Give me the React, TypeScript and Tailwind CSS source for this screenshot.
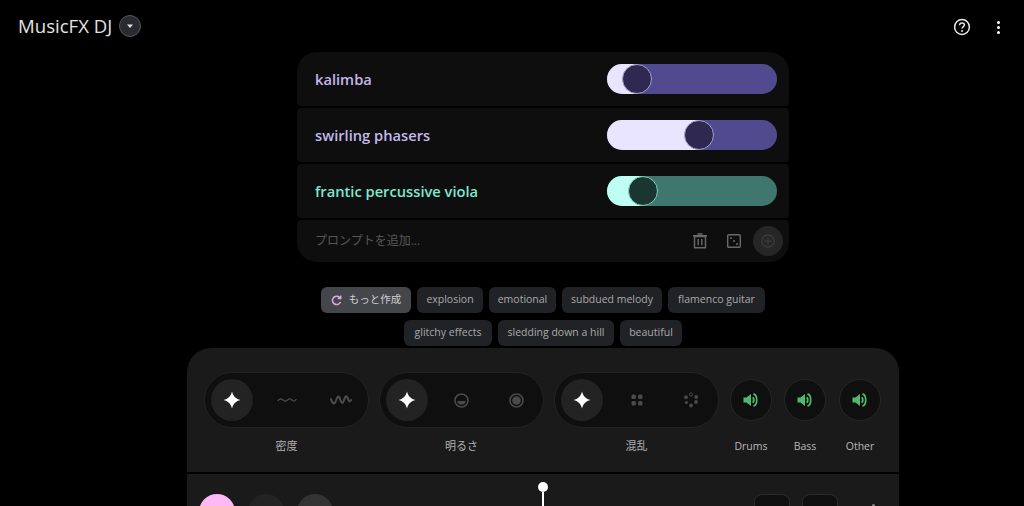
import { ReactNode } from 'react'

const font = { sans: 'font-["Open_Sans","Noto_Sans_CJK_JP",sans-serif]' }

const prompts = [
  { name: 'kalimba', fill: 'w-[30px]', text: 'text-[#c4b8ea]', track: 'bg-[#524a8f]', left: 'bg-[#e9e5ff]', knob: 'bg-[#2f2850]', ring: 'border-[#a79fd0]', pos: 'left-[15px]' },
  { name: 'swirling phasers', fill: 'w-[92px]', text: 'text-[#c4b8ea]', track: 'bg-[#524a8f]', left: 'bg-[#e9e5ff]', knob: 'bg-[#2f2850]', ring: 'border-[#a79fd0]', pos: 'left-[77px]' },
  { name: 'frantic percussive viola', fill: 'w-[36px]', text: 'text-[#7fe8d0]', track: 'bg-[#3f776e]', left: 'bg-[#bffff3]', knob: 'bg-[#1b3630]', ring: 'border-[#7fd0c0]', pos: 'left-[21px]' },
]

const chipRows = [
  [
    { label: 'explosion', w: 'w-[66px]' },
    { label: 'emotional', w: 'w-[67px]' },
    { label: 'subdued melody', w: 'w-[100px]' },
    { label: 'flamenco guitar', w: 'w-[97px]' },
  ],
  [
    { label: 'glitchy effects', w: 'w-[88px]' },
    { label: 'sledding down a hill', w: 'w-[116px]' },
    { label: 'beautiful', w: 'w-[62px]' },
  ],
]

function Sparkle() {
  return (
    <svg width="20" height="20" viewBox="0 0 20 20">
      <path d="M10 1.5C11 6 14 9 18.5 10C14 11 11 14 10 18.5C9 14 6 11 1.5 10C6 9 9 6 10 1.5Z" fill="#fff" />
    </svg>
  )
}

function Speaker() {
  return (
    <svg width="16" height="14" viewBox="0 0 16 14" fill="none">
      <path d="M0.5 4.5H3.5L8 1V13L3.5 9.5H0.5Z" fill="#4fb96f" />
      <path d="M9.8 4.2C11 5.8 11 8.2 9.8 9.8" stroke="#4fb96f" strokeWidth="1.7" />
      <path d="M10.5 0.9C14.8 2.2 14.8 11.8 10.5 13.1" stroke="#4fb96f" strokeWidth="1.7" />
    </svg>
  )
}

const densityLow = (
  <svg width="20" height="8" viewBox="0 0 20 8" fill="none">
    <path d="M1 4.5C3 2.5 4.5 2.5 6 4C7.5 5.5 9 5.5 10.5 4C12 2.5 13.5 2.5 15 4C16.5 5.5 18 5.5 19 3.5" stroke="#484848" strokeWidth="1.3" strokeLinecap="round" />
  </svg>
)

const densityHigh = (
  <svg width="22" height="12" viewBox="0 0 22 12" fill="none">
    <path d="M1 5C2.5 10.5 4.5 11 6 6.5C7.2 2.5 8.6 0.5 10 5C11.2 9.5 12.8 10.5 14 6C15 2.5 16.5 0.5 18 5C18.8 7.5 20 8 21 6" stroke="#4d4d4d" strokeWidth="2" strokeLinecap="round" />
  </svg>
)

const brightLow = (
  <svg width="15" height="15" viewBox="0 0 15 15" fill="none">
    <circle cx="7.5" cy="7.5" r="6.5" stroke="#4a4a4a" strokeWidth="1.6" />
    <path d="M3.2 8H11.8C11.4 10.5 9.6 11.8 7.5 11.8C5.4 11.8 3.6 10.5 3.2 8Z" fill="#4a4a4a" />
  </svg>
)

const brightHigh = (
  <svg width="15" height="15" viewBox="0 0 15 15" fill="none">
    <circle cx="7.5" cy="7.5" r="6.5" stroke="#4a4a4a" strokeWidth="1.6" />
    <circle cx="7.5" cy="7.5" r="4.3" fill="#4a4a4a" />
  </svg>
)

const chaosLow = (
  <svg width="12" height="12" viewBox="0 0 12 12" fill="#4a4a4a">
    <rect x="0.5" y="0.5" width="4.5" height="4.5" rx="1.6" />
    <rect x="7" y="0.5" width="4.5" height="4.5" rx="1.6" />
    <rect x="0.5" y="7" width="4.5" height="4.5" rx="1.6" />
    <rect x="7" y="7" width="4.5" height="4.5" rx="1.6" />
  </svg>
)

const chaosHigh = (
  <svg width="16" height="16" viewBox="0 0 16 16" fill="#4a4a4a">
    <circle cx="8" cy="2.5" r="1.6" fill="none" stroke="#4a4a4a" />
    <circle cx="13.2" cy="5" r="1.9" />
    <circle cx="13" cy="10" r="1.9" />
    <circle cx="8" cy="13.5" r="1.9" />
    <circle cx="3.4" cy="10.5" r="1.6" />
    <circle cx="3" cy="5.2" r="1.9" />
  </svg>
)

function PillControl({ label, first, second }: { label: string; first: ReactNode; second: ReactNode }) {
  return (
    <div className="flex w-[165px] flex-col items-center">
      <div className="flex h-[56px] w-full items-center rounded-full border border-[#232323] bg-[#0f0f0f] pl-[6px]">
        <div className="flex h-[42px] w-[42px] shrink-0 items-center justify-center rounded-full bg-[#232323]">
          <Sparkle />
        </div>
        <div className="ml-[6px] flex w-[55px] shrink-0 justify-center">{first}</div>
        <div className="flex w-[54px] shrink-0 justify-center">{second}</div>
      </div>
      <span className="mt-[11px] text-[11px] leading-[14px] text-[#b0b0b0]">{label}</span>
    </div>
  )
}

function StemControl({ label }: { label: string }) {
  return (
    <div className="flex w-[42px] flex-col items-center">
      <div className="mt-[7px] flex h-[42px] w-[42px] items-center justify-center rounded-full border border-[#262626] bg-[#0f0f0f]">
        <Speaker />
      </div>
      <span className="mt-[18px] text-[10.5px] leading-[14px] text-[#b8b8b8]">{label}</span>
    </div>
  )
}

export default function App() {
  return (
    <div className={`h-[506px] w-[1024px] overflow-hidden bg-black ${font.sans}`}>
      <header className="flex h-[52px] items-center justify-between pl-[18px] pr-[24px]">
        <div className="flex items-center gap-[7px]">
          <h1 className="text-[18.6px] font-normal leading-none text-[#e3e3e3]">MusicFX DJ</h1>
          <div className="flex h-[22px] w-[22px] items-center justify-center rounded-full border border-[#55565c] bg-[#2a2b30]">
            <svg width="8" height="5" viewBox="0 0 8 5"><path d="M1 0.5H7L4 4Z" fill="#e3e3e3" /></svg>
          </div>
        </div>
        <div className="flex items-center gap-[26px] pt-[2px]">
          <svg width="18" height="18" viewBox="0 0 18 18" fill="none">
            <circle cx="9" cy="9" r="7.4" stroke="#e8e8e8" strokeWidth="1.5" />
            <path d="M6.6 7.2C6.6 5.8 7.7 5 9 5C10.4 5 11.4 5.9 11.4 7.1C11.4 8.6 9.1 8.8 9.1 10.6" stroke="#e8e8e8" strokeWidth="1.5" />
            <circle cx="9" cy="12.9" r="1" fill="#e8e8e8" />
          </svg>
          <div className="flex flex-col gap-[2px]">
            <span className="h-[3px] w-[3px] rounded-full bg-white" />
            <span className="h-[3px] w-[3px] rounded-full bg-white" />
            <span className="h-[3px] w-[3px] rounded-full bg-white" />
          </div>
        </div>
      </header>

      <main className="pl-[62px]">
        <section className="mx-auto flex w-[492px] flex-col gap-[2px] overflow-hidden rounded-[20px]">
          {prompts.map((p) => (
            <div key={p.name} className="flex h-[54px] items-center justify-between rounded-[4px] bg-[#0e0e0e] pl-[18px] pr-[12px]">
              <span className={`text-[14.7px] font-semibold ${p.text}`}>{p.name}</span>
              <div className={`relative h-[30px] w-[170px] rounded-full ${p.track}`}>
                <div className={`h-[30px] rounded-l-full ${p.fill} ${p.left}`} />
                <div className={`absolute top-0 h-[30px] w-[30px] rounded-full border ${p.knob} ${p.ring} ${p.pos}`} />
              </div>
            </div>
          ))}
          <div className="flex h-[42px] items-center justify-between rounded-[4px] bg-[#0e0e0e] pl-[18px] pr-[6px]">
            <span className="text-[12px] text-[#565656]">プロンプトを追加...</span>
            <div className="flex items-center">
              <svg width="14" height="16" viewBox="0 0 14 16" fill="none" stroke="#6a6a6a" strokeWidth="1.4">
                <path d="M1.5 3.5H12.5V14.8H1.5Z" />
                <path d="M0 2.8H14M4.5 1H9.5M5.2 6V12.3M8.8 6V12.3" />
              </svg>
              <svg className="ml-[20px]" width="14" height="14" viewBox="0 0 14 14" fill="none">
                <rect x="0.7" y="0.7" width="12.6" height="12.6" rx="1" stroke="#6a6a6a" strokeWidth="1.4" />
                <circle cx="4" cy="4" r="1" fill="#6a6a6a" />
                <circle cx="7" cy="7" r="1" fill="#6a6a6a" />
                <circle cx="10" cy="10" r="1" fill="#6a6a6a" />
              </svg>
              <div className="ml-[12px] flex h-[30px] w-[30px] items-center justify-center rounded-full bg-[#262626]">
                <svg width="14" height="14" viewBox="0 0 14 14" fill="none" stroke="#3f3f3f" strokeWidth="1.2">
                  <circle cx="7" cy="7" r="6.2" />
                  <path d="M7 3.5V10.5M3.5 7H10.5" />
                </svg>
              </div>
            </div>
          </div>
        </section>

        <div className="mt-[25px] flex flex-col items-center gap-[7px]">
          <div className="flex gap-[6px]">
            <div className="flex h-[26px] w-[90px] items-center justify-center gap-[7px] rounded-[6px] bg-[#43464a] text-[10.5px] text-[#cfcfcf]">
              <svg width="11" height="11" viewBox="0 0 11 11" fill="none" stroke="#e6a6e6" strokeWidth="1.5">
                <path d="M9.5 7A4.2 4.2 0 1 1 8.6 2.4L9.6 3.4" />
                <path d="M9.7 0.6V3.6H6.7" />
              </svg>
              もっと作成
            </div>
            {chipRows[0].map((c) => (
              <div key={c.label} className={`flex h-[26px] items-center justify-center rounded-[6px] bg-[#212226] text-[10.5px] text-[#a9a9a9] ${c.w}`}>{c.label}</div>
            ))}
          </div>
          <div className="flex gap-[6px]">
            {chipRows[1].map((c) => (
              <div key={c.label} className={`flex h-[26px] items-center justify-center rounded-[6px] bg-[#212226] text-[10.5px] text-[#a9a9a9] ${c.w}`}>{c.label}</div>
            ))}
          </div>
        </div>

        <section className="mx-auto mt-[2px] w-[712px] rounded-t-[24px] bg-[#1a1a1a]">
          <div className="flex h-[126px] border-b-2 border-black pl-[17px] pt-[24px]">
            <div className="flex gap-[10px]">
              <PillControl label="密度" first={densityLow} second={densityHigh} />
              <PillControl label="明るさ" first={brightLow} second={brightHigh} />
              <PillControl label="混乱" first={chaosLow} second={chaosHigh} />
            </div>
            <div className="ml-[11px] flex gap-[12px]">
              <StemControl label="Drums" />
              <StemControl label="Bass" />
              <div className="ml-[1px]"><StemControl label="Other" /></div>
            </div>
          </div>
          <div className="relative flex pl-[12px] pt-[20px]">
            <div className="h-[36px] w-[36px] rounded-full bg-[#ffb8f5]" />
            <div className="ml-[13px] h-[36px] w-[36px] rounded-full bg-[#232323]" />
            <div className="ml-[13px] h-[36px] w-[36px] rounded-full bg-[#333333]" />
            <div className="ml-[421px] h-[36px] w-[36px] rounded-[8px] border border-[#2c2c2c] bg-[#0f0f0f]" />
            <div className="ml-[12px] h-[36px] w-[36px] rounded-[8px] border border-[#2c2c2c] bg-[#0f0f0f]" />
            <div className="absolute left-[351px] top-[8px] flex flex-col items-center">
              <span className="h-[10px] w-[10px] rounded-full bg-white" />
              <span className="h-[30px] w-[2px] bg-white" />
            </div>
            <span className="absolute left-[685px] top-[30px] h-[3px] w-[3px] rounded-full bg-[#8a8a8a]" />
          </div>
        </section>
      </main>
    </div>
  )
}
